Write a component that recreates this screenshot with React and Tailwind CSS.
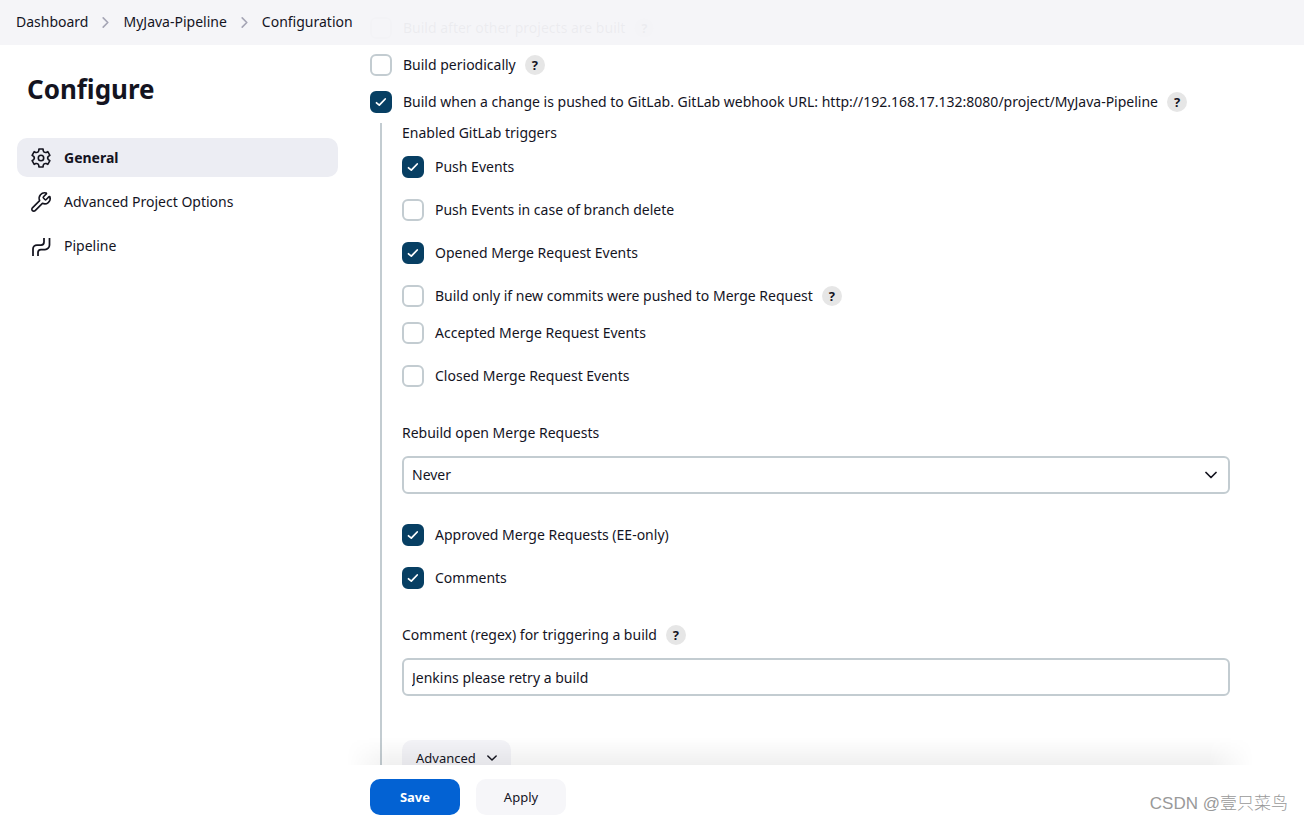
import { useState } from "react";
import { Wrench } from "lucide-react";

const crumbs = ["Dashboard", "MyJava-Pipeline", "Configuration"];

// Six-toothed cog around (12, 12)
const polar = (deg, r) => {
  const a = (deg * Math.PI) / 180;
  return `${(12 + r * Math.cos(a)).toFixed(2)} ${(12 + r * Math.sin(a)).toFixed(2)}`;
};
const cogPath = [-90, -30, 30, 90, 150, 210]
  .map((t, i) =>
    `${i === 0 ? "M" : "L"}${polar(t - 17, 7.6)} L${polar(t - 13, 9.3)} L${polar(t + 13, 9.3)} L${polar(t + 17, 7.6)} Q${polar(t + 30, 5.9)} ${polar(t + 43, 7.6)}`)
  .join(" ") + "Z";

const GearIcon = ({ className }) => (
  <svg viewBox="0 0 24 24" fill="none" stroke="currentColor" strokeWidth="1.6" strokeLinejoin="round" className={className}>
    <path d={cogPath} />
    <circle cx="12" cy="12" r="2.700" />
  </svg>
);

const WrenchIcon = ({ className }) => (
  <span className={`grid place-items-center ${className}`}>
    <Wrench className="h-[22px] w-[22px]" strokeWidth={1.75} />
  </span>
);

const PipelineIcon = ({ className }) => (
  <svg viewBox="0 0 24 24" fill="none" stroke="currentColor" strokeWidth="1.75" className={className}>
    <path d="M4 22v-7a4 4 0 0 1 4-4h4a3 3 0 0 0 3-3V4" />
    <path d="M9 22v-3.500a3 3 0 0 1 3-3h4a4.500 4.500 0 0 0 4.500-4.500V4" />
  </svg>
);

const Chevron = ({ className }) => (
  <svg viewBox="0 0 12 12" fill="none" stroke="currentColor" strokeWidth="1.75" strokeLinecap="round" strokeLinejoin="round" className={className}>
    <path d="M1 3.500 6 8.500l5-5" />
  </svg>
);

const sections = [
  { name: "General", icon: GearIcon },
  { name: "Advanced Project Options", icon: WrenchIcon },
  { name: "Pipeline", icon: PipelineIcon },
];

const Help = ({ topic }) => (
  <button type="button" aria-label={`Help for ${topic}`}
    className="flex h-5 w-5 shrink-0 items-center justify-center rounded-full bg-[#e6e6e6] text-[13px] font-bold">
    ?
  </button>
);

const Check = ({ id, label, checked = false, help = false }) => {
  const [on, setOn] = useState(checked);
  return (
    <div className="flex h-[22px] items-center gap-[9px]">
      <label htmlFor={id} className="flex items-center gap-[11px] whitespace-nowrap">
        <span className="grid h-[22px] w-[22px] shrink-0 place-items-center">
          <input id={id} type="checkbox" checked={on} onChange={(e) => setOn(e.target.checked)}
            className="peer col-start-1 row-start-1 h-[22px] w-[22px] appearance-none rounded-md border-2 border-[#c3ccd1] bg-white checked:border-[#073f63] checked:bg-[#073f63]" />
          <svg viewBox="0 0 12 12" fill="none" stroke="white" strokeWidth="1.75" strokeLinecap="round" strokeLinejoin="round"
            className="pointer-events-none invisible col-start-1 row-start-1 h-3 w-3 peer-checked:visible">
            <path d="M1.500 6.800 4.300 9.200l5.900-6.200" />
          </svg>
        </span>
        {label}
      </label>
      {help && <Help topic={label} />}
    </div>
  );
};

const App = () => {
  const [active, setActive] = useState("General");

  return (
    <div className="flex h-screen flex-col overflow-hidden bg-white font-['Noto_Sans',sans-serif] text-sm leading-5 text-[#14141f]">
      <header className="z-10 flex h-[45px] shrink-0 items-center bg-[#f5f5f8]/96 px-4 pb-px">
        <nav aria-label="Breadcrumb">
          <ol className="flex items-center gap-3">
            {crumbs.map((name, i) => (
              <li key={name} className="flex items-center gap-3">
                {i > 0 && <Chevron className="h-[11px] w-[11px] -rotate-90 text-[#a5a5b5]" />}
                <a href="#">{name}</a>
              </li>
            ))}
          </ol>
        </nav>
      </header>

      <div className="flex min-h-0 flex-1">
        <aside className="w-[370px] shrink-0 pt-6 pr-8 pl-[17px]">
          <h1 className="px-[10px] text-[26px] leading-10 font-bold">Configure</h1>
          <nav className="mt-[29px] flex flex-col gap-[5px]">
            {sections.map(({ name, icon: Icon }) => (
              <button key={name} type="button" onClick={() => setActive(name)}
                className={`flex h-[39px] items-center gap-[11px] rounded-[10px] px-3 text-left ${active === name ? "bg-[#ecedf3] font-bold" : ""}`}>
                <Icon className="h-6 w-6 shrink-0" />
                {name}
              </button>
            ))}
          </nav>
        </aside>

        <div className="-mt-[45px] flex min-w-0 flex-1 flex-col">
          <main className="min-h-0 flex-1 overflow-hidden pt-[17px] pr-[74px]">
            <div className="flex flex-col gap-[15px]">
              <Check id="after-projects" label="Build after other projects are built" help />
              <Check id="periodically" label="Build periodically" help />
              <Check id="gitlab" checked help
                label="Build when a change is pushed to GitLab. GitLab webhook URL: http://192.168.17.132:8080/project/MyJava-Pipeline" />
            </div>

            <div className="mt-[10px] ml-[10px] border-l-2 border-[#c3ccd1] pb-10 pl-5">
              <p>Enabled GitLab triggers</p>
              <div className="mt-[13px] flex flex-col gap-[21px]">
                <Check id="push" label="Push Events" checked />
                <Check id="branch-delete" label="Push Events in case of branch delete" />
                <Check id="opened" label="Opened Merge Request Events" checked />
                <div className="flex flex-col gap-[15px]">
                  <Check id="new-commits" label="Build only if new commits were pushed to Merge Request" help />
                  <Check id="accepted" label="Accepted Merge Request Events" />
                </div>
                <Check id="closed" label="Closed Merge Request Events" />
              </div>

              <label htmlFor="rebuild" className="mt-9 block">Rebuild open Merge Requests</label>
              <div className="mt-[13px] grid items-center">
                <select id="rebuild" defaultValue="Never"
                  className="col-start-1 row-start-1 h-[38px] w-full appearance-none rounded-md border-2 border-[#c3ccd1] bg-white px-2">
                  <option>Never</option>
                  <option>On push to source branch</option>
                  <option>On push to source or target branch</option>
                </select>
                <Chevron className="pointer-events-none col-start-1 row-start-1 mr-[13px] h-3 w-3 justify-self-end" />
              </div>

              <div className="mt-[30px] flex flex-col gap-[21px]">
                <Check id="approved" label="Approved Merge Requests (EE-only)" checked />
                <Check id="comments" label="Comments" checked />
              </div>

              <div className="mt-9 flex items-center gap-[9px]">
                <label htmlFor="regex">Comment (regex) for triggering a build</label>
                <Help topic="Comment (regex) for triggering a build" />
              </div>
              <input id="regex" type="text" defaultValue="Jenkins please retry a build"
                className="mt-[13px] h-[38px] w-full rounded-md border-2 border-[#c3ccd1] bg-white px-2" />

              <button type="button" className="mt-11 flex h-9 items-center gap-[11px] rounded-[10px] bg-[#f4f4f8] px-[14px] text-[13px]">
                Advanced
                <Chevron className="h-[10px] w-[10px]" />
              </button>
            </div>
          </main>

          <footer className="relative flex shrink-0 gap-4 bg-white pt-[14px] pb-[7px]">
            {/* soft shadow over the end of the form */}
            <div className="pointer-events-none absolute right-[50px] bottom-full -left-6 h-7 bg-linear-to-t from-black/6 to-transparent mask-x-from-95% mask-x-to-100%" />
            <button type="submit" className="h-9 w-[90px] rounded-[10px] bg-[#0362d3] text-[13px] font-bold text-white">Save</button>
            <button type="button" className="h-9 w-[90px] rounded-[10px] bg-[#f6f6f9] text-[13px]">Apply</button>
            <span className="absolute right-4 bottom-[6px] font-['Liberation_Sans','Noto_Sans_CJK_SC',sans-serif] text-[17px] leading-6 font-light text-[#999999]">
              CSDN @壹只菜鸟
            </span>
          </footer>
        </div>
      </div>
    </div>
  );
};

export default App;
